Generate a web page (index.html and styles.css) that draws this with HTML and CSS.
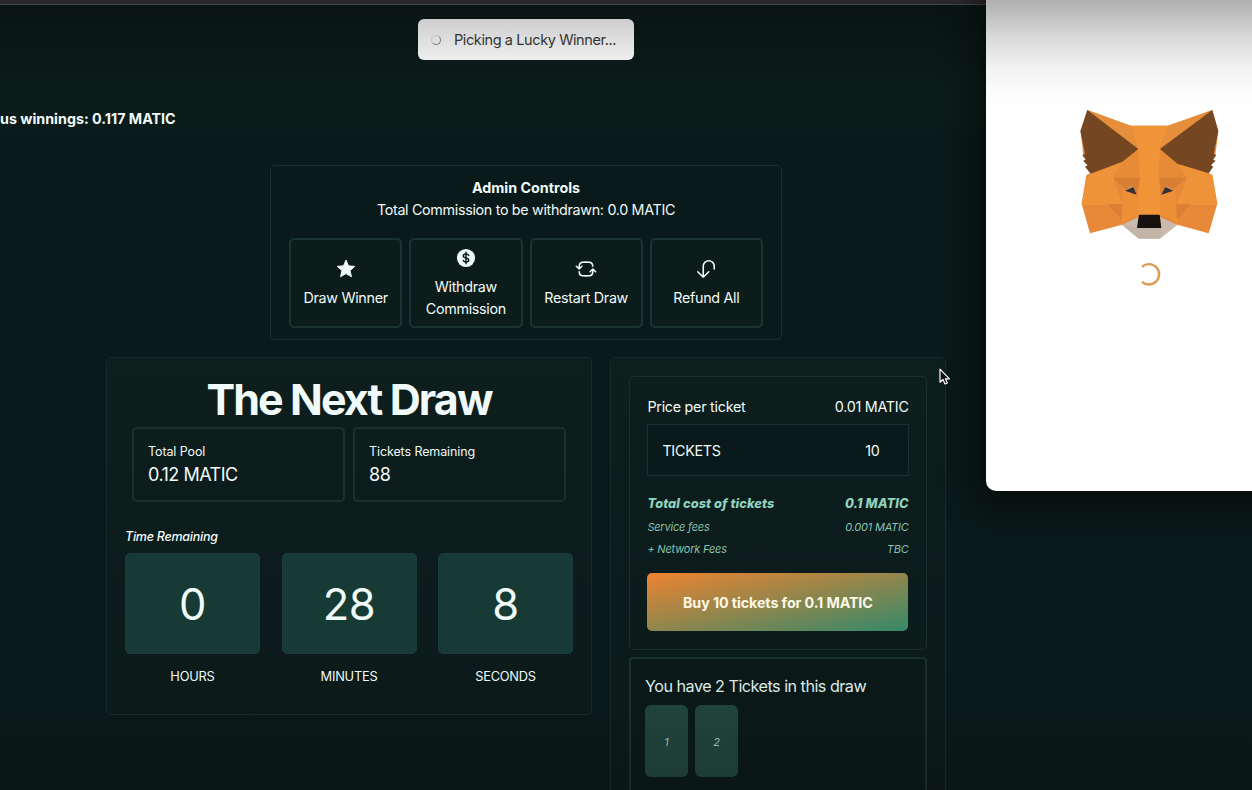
FILE: index.html
```html
<!DOCTYPE html>
<html lang="en">
<head>
<meta charset="utf-8">
<title>MATIC Draw</title>
<link rel="stylesheet" href="styles.css">
</head>
<body>
<div class="app">
  <div class="chrome-edge"></div>
  <header class="marquee"><span class="marquee-text">us winnings: 0.117 MATIC</span></header>
  <main class="content">
    <section class="admin">
      <h2 class="admin-title"><span>Admin Controls</span></h2>
      <p class="admin-sub"><span>Total Commission to be withdrawn: 0.0 MATIC</span></p>
      <div class="admin-grid">
        <button class="admin-btn">
          <svg class="icon" viewBox="0 0 24 24"><path fill="currentColor" stroke="currentColor" stroke-width="1" stroke-linejoin="round" d="M12 2.2l2.75 6.3 6.85.65-5.15 4.6 1.5 6.75L12 17l-5.95 3.5 1.5-6.75-5.15-4.6 6.85-.65z"/></svg>
          <span>Draw Winner</span>
        </button>
        <button class="admin-btn">
          <svg class="icon" viewBox="0 0 24 24"><circle cx="12" cy="12" r="9.9" fill="currentColor"/><path fill="none" stroke="#0c1b1b" stroke-width="1.6" stroke-linecap="round" d="M12 5.8v12.4M15 9.3c-.5-1-1.6-1.6-3-1.6-1.8 0-3 .9-3 2.1 0 3.200 6 1.300 6 4.400 0 1.200-1.200 2.100-3 2.100-1.400 0-2.500-.6-3-1.600"/></svg>
          <span>Withdraw<br>Commission</span>
        </button>
        <button class="admin-btn">
          <svg class="icon" viewBox="0 0 24 24"><path fill="none" stroke="currentColor" stroke-width="1.700" stroke-linecap="round" stroke-linejoin="round" d="M19.500 12c0-1.232-.046-2.453-.138-3.662a4.006 4.006 0 00-3.700-3.700 48.678 48.678 0 00-7.324 0 4.006 4.006 0 00-3.700 3.700c-.017.220-.032.441-.046.662M19.500 12l3-3m-3 3l-3-3m-12 3c0 1.232.046 2.453.138 3.662a4.006 4.006 0 003.700 3.700 48.656 48.656 0 007.324 0 4.006 4.006 0 003.700-3.700c.017-.220.032-.441.046-.662M4.500 12l3 3m-3-3l-3 3" transform="matrix(-1 0 0 1 24 0)"/></svg>
          <span>Restart Draw</span>
        </button>
        <button class="admin-btn">
          <svg class="icon" viewBox="0 0 24 24"><path fill="none" stroke="currentColor" stroke-width="1.700" stroke-linecap="round" stroke-linejoin="round" d="M15 15l-6 6m0 0l-6-6m6 6V9a6 6 0 0112 0v3"/></svg>
          <span>Refund All</span>
        </button>
      </div>
    </section>

    <div class="columns">
      <section class="panel draw">
        <h1 class="draw-title"><span>The Next Draw</span></h1>
        <div class="stats">
          <div class="stat"><h3><span>Total Pool</span></h3><p><span>0.12 MATIC</span></p></div>
          <div class="stat"><h3><span>Tickets Remaining</span></h3><p><span>88</span></p></div>
        </div>
        <h4 class="time-title"><span>Time Remaining</span></h4>
        <div class="timer">
          <div class="unit"><div class="digits">0</div><div class="label">HOURS</div></div>
          <div class="unit"><div class="digits">28</div><div class="label">MINUTES</div></div>
          <div class="unit"><div class="digits">8</div><div class="label">SECONDS</div></div>
        </div>
      </section>

      <section class="panel buy">
        <div class="price-card">
          <div class="row price"><span>Price per ticket</span><span>0.01 MATIC</span></div>
          <div class="field"><span>TICKETS</span><span>10</span></div>
          <div class="row total"><span>Total cost of tickets</span><span>0.1 MATIC</span></div>
          <div class="row fee"><span>Service fees</span><span>0.001 MATIC</span></div>
          <div class="row fee last"><span>+ Network Fees</span><span>TBC</span></div>
          <button class="buy-btn"><span>Buy 10 tickets for 0.1 MATIC</span></button>
        </div>
        <div class="owned-card">
          <p class="owned-title"><span>You have 2 Tickets in this draw</span></p>
          <div class="tickets"><div class="ticket">1</div><div class="ticket">2</div></div>
        </div>
      </section>
    </div>
  </main>

  <div class="shade"></div>

  <div class="toast"><i class="toast-spin"></i><span>Picking a Lucky Winner...</span></div>

  <aside class="wallet">
    <svg class="fox" viewBox="60 57 420 393" width="140" height="131">
      <path fill="#e8893a" d="M82 60L212 107H324L457 60L475 124L466 196L446 250L457 255L472 341L446 430L352 404L300 444H236L186 404L90 430L65 341L79 255L92 250L70 196L62 124Z"/>
      <path fill="#f09437" d="M212 107H324L300 177V376H234V177Z"/>
      <path fill="#e58f3d" d="M82 60L212 107L234 177ZM457 60L324 107L300 177Z"/>
      <path fill="#ef9338" d="M92 251L187 214L160 268L188 345H65L79 270ZM446 250L352 214L380 266L349 345H472L457 255Z"/>
      <path fill="#e68b36" d="M187 218L234 179L240 270L160 265ZM352 220L300 179L295 270L380 265Z"/>
      <path fill="#d97f34" d="M158 263H240L232 315L195 296ZM380 263H297L303 315L340 296Z"/>
      <path fill="#da7f34" d="M143 343H188L185 390ZM393 343H346L350 390Z"/>
      <path fill="#ec8f35" d="M188 300L234 315V376L186 398ZM346 300L301 315V376L352 400Z"/>
      <path fill="#744622" d="M82 60L235 177L187 215L92 251L75 230L83 226L69 212L78 209L67 196L75 191L61 124ZM457 60L300 177L352 221L446 250L460 230L452 226L467 212L458 209L469 196L461 191L475 124Z"/>
      <path fill="#c9bbad" d="M186 404L235 381L231 413H304L300 381L352 404L300 446H236Z"/>
      <path fill="#b9aa9b" d="M231 413H304L300 446H236L186 404Z" opacity=".4"/>
      <path fill="#17120f" d="M237 374H299L304 414H231Z"/>
      <path fill="#c9a28c" d="M195 301L218 288L230 314ZM340 301L318 288L304 314Z"/>
      <path fill="#38302f" d="M195 302L220 291L230 314ZM340 302L316 291L304 314Z"/>
    </svg>
    <svg class="wallet-spin" viewBox="0 0 24 24" width="24" height="24"><path fill="none" stroke="#dc9a52" stroke-width="2.400" d="M5 4.800A10.200 10.200 0 1 1 5 19.800"/></svg>
  </aside>

  <svg class="cursor" viewBox="0 0 12 18" width="12" height="18"><path fill="#111" stroke="#fff" stroke-width="1.200" stroke-linejoin="round" d="M1 1.200V14.200L4 11.500L6 16L8.300 15L6.400 10.800H10.400Z"/></svg>
</div>
</body>
</html>
```
FILE: styles.css
```css
* { box-sizing: border-box; margin: 0; padding: 0; }

body {
  width: 1252px;
  height: 790px;
  overflow: hidden;
  background: #0a1919;
  color: #f0faf8;
  font-family: Inter, "Liberation Sans", sans-serif;
  font-size: 14.3px;
  line-height: 22px;
}

button { font: inherit; color: inherit; background: none; border: 0; }

.app { position: relative; width: 1252px; height: 790px; overflow: hidden; }

.chrome-edge { height: 5px; background: #2a262a; border-bottom: 1px solid #454747; }

.marquee {
  height: 142px;
  padding-top: 103px;
  background: linear-gradient(#0a1a1a, #0c1c1b 75%, #0a1919);
  font-weight: 700;
  white-space: nowrap;
}
.marquee-text { letter-spacing: 0; }

.content { width: 840px; margin: 18px 0 0 106px; }

.admin {
  width: 512px;
  height: 175px;
  margin: 0 auto;
  padding: 11px 18px;
  border: 1px solid #1a2f2e;
  border-radius: 5px;
  text-align: center;
}
.admin-title { font-size: 14.3px; font-weight: 700; }
.admin-sub { letter-spacing: -0.31px; }
.admin-grid { display: grid; grid-template-columns: repeat(4, 1fr); gap: 7px; margin-top: 17px; }
.admin-btn {
  display: flex;
  flex-direction: column;
  align-items: center;
  justify-content: center;
  height: 90px;
  padding-top: 1px;
  border: 2px solid #1b3331;
  border-radius: 5px;
  background: #0c1c1b;
  letter-spacing: -0.3px;
}
.icon { display: block; width: 22px; height: 22px; margin-bottom: 7px; }

.columns { display: grid; grid-template-columns: 486px 336px; gap: 18px; margin-top: 17px; align-items: start; }

.panel { border: 1px solid #172c2a; border-radius: 5px; background: linear-gradient(#0d1e1d, #0c1a1a 360px); padding: 18px; }

.draw { height: 358px; }
.draw-title { height: 48px; font-size: 43px; line-height: 46px; font-weight: 700; letter-spacing: -1.9px; text-align: center; }
.stats { display: grid; grid-template-columns: 213px 213px; gap: 8px; padding: 3px 7px 0; }
.stat { height: 75px; padding: 12px 14px; border: 2px solid #1a302e; border-radius: 5px; }
.stat h3 { font-size: 12.500px; line-height: 22px; font-weight: 400; letter-spacing: -0.1px; }
.stat p { font-size: 18px; line-height: 23px; letter-spacing: -0.5px; }
.time-title { margin-top: 24px; font-size: 12.500px; font-style: italic; font-weight: 500; letter-spacing: -0.25px; }
.timer { display: grid; grid-template-columns: repeat(3, 135px); justify-content: space-between; margin-top: 5px; }
.digits {
  height: 101px;
  border-radius: 5px;
  background: #173a34;
  border: 1px solid #1b3d38;
  font-size: 43.500px;
  line-height: 101px;
  letter-spacing: -0.5px;
  text-align: center;
}
.label { margin-top: 12px; font-size: 12.800px; text-align: center; letter-spacing: -0.2px; }

.buy { height: 460px; }
.price-card { height: 274px; padding: 18px 17.400px; border: 1px solid #1a302e; border-radius: 5px; }
.row { display: flex; justify-content: space-between; }
.price { letter-spacing: -0.25px; padding-top: 1px; }
.field {
  display: flex;
  justify-content: space-between;
  align-items: center;
  height: 52px;
  margin: 6px 0 16px;
  padding: 1px 28px 0 14px;
  border: 1px solid #1b302e;
  background: #0a1919;
  letter-spacing: -0.25px;
}
.total { font-size: 12.800px; font-weight: 800; font-style: italic; color: #8fd3bf; line-height: 24px; letter-spacing: 0.1px; }
.fee { font-size: 11px; font-style: italic; color: #84c2b1; letter-spacing: -0.2px; }
.last { margin-bottom: 13px; }
.buy-btn {
  display: block;
  width: 261px;
  height: 58px;
  padding-top: 1px;
  border-radius: 5px;
  background: linear-gradient(to bottom right, #ee832f, #34896a);
  color: #fdf8e6;
  font-weight: 700;
  letter-spacing: -0.1px;
}
.owned-card { height: 150px; margin-top: 7px; padding: 16px 14px; border: 2px solid #1a302e; border-radius: 4px; background: #0a1918; }
.owned-title { font-size: 16.200px; letter-spacing: -0.52px; color: #dceae7; }
.tickets { display: flex; gap: 7px; margin-top: 8px; }
.ticket {
  width: 43px;
  height: 72px;
  border-radius: 6px;
  background: #20433b;
  color: #9cc0b5;
  font-size: 11px;
  font-style: italic;
  line-height: 74px;
  text-align: center;
}

/* Layers floating above the page */
.shade {
  position: absolute;
  left: 0;
  top: 5px;
  width: 1252px;
  height: 785px;
  pointer-events: none;
  background: linear-gradient(rgba(5, 8, 6, 0.3), transparent 80px, transparent 700px, rgba(5, 8, 6, 0.15));
}
.toast {
  position: absolute;
  left: 418px;
  top: 19px;
  width: 216px;
  height: 41px;
  display: flex;
  align-items: center;
  padding-left: 13px;
  border-radius: 6px;
  background: linear-gradient(#cdcdcd, #efefef);
  color: #343434;
  font-size: 14.500px;
  letter-spacing: -0.4px;
}
.toast-spin { width: 10px; height: 10px; margin-right: 13px; border: 1.500px solid #c4c4c4; border-right-color: #777; border-bottom-color: #777; border-radius: 50%; }
.wallet {
  position: absolute;
  left: 986px;
  top: 0;
  width: 290px;
  height: 491px;
  padding: 109px 0 0 93.500px;
  border-radius: 0 0 0 10px;
  background: linear-gradient(#afafaf, #bbb 11px, #dadada 38px, #f0f0f0 65px, #fcfcfc 93px, #fff 115px);
  box-shadow: 0 6px 32px 8px rgba(7, 10, 9, 0.85);
}
.fox { display: block; }
.wallet-spin { display: block; margin: 22px 0 0 57px; }
.cursor { position: absolute; left: 939px; top: 368px; }
```
